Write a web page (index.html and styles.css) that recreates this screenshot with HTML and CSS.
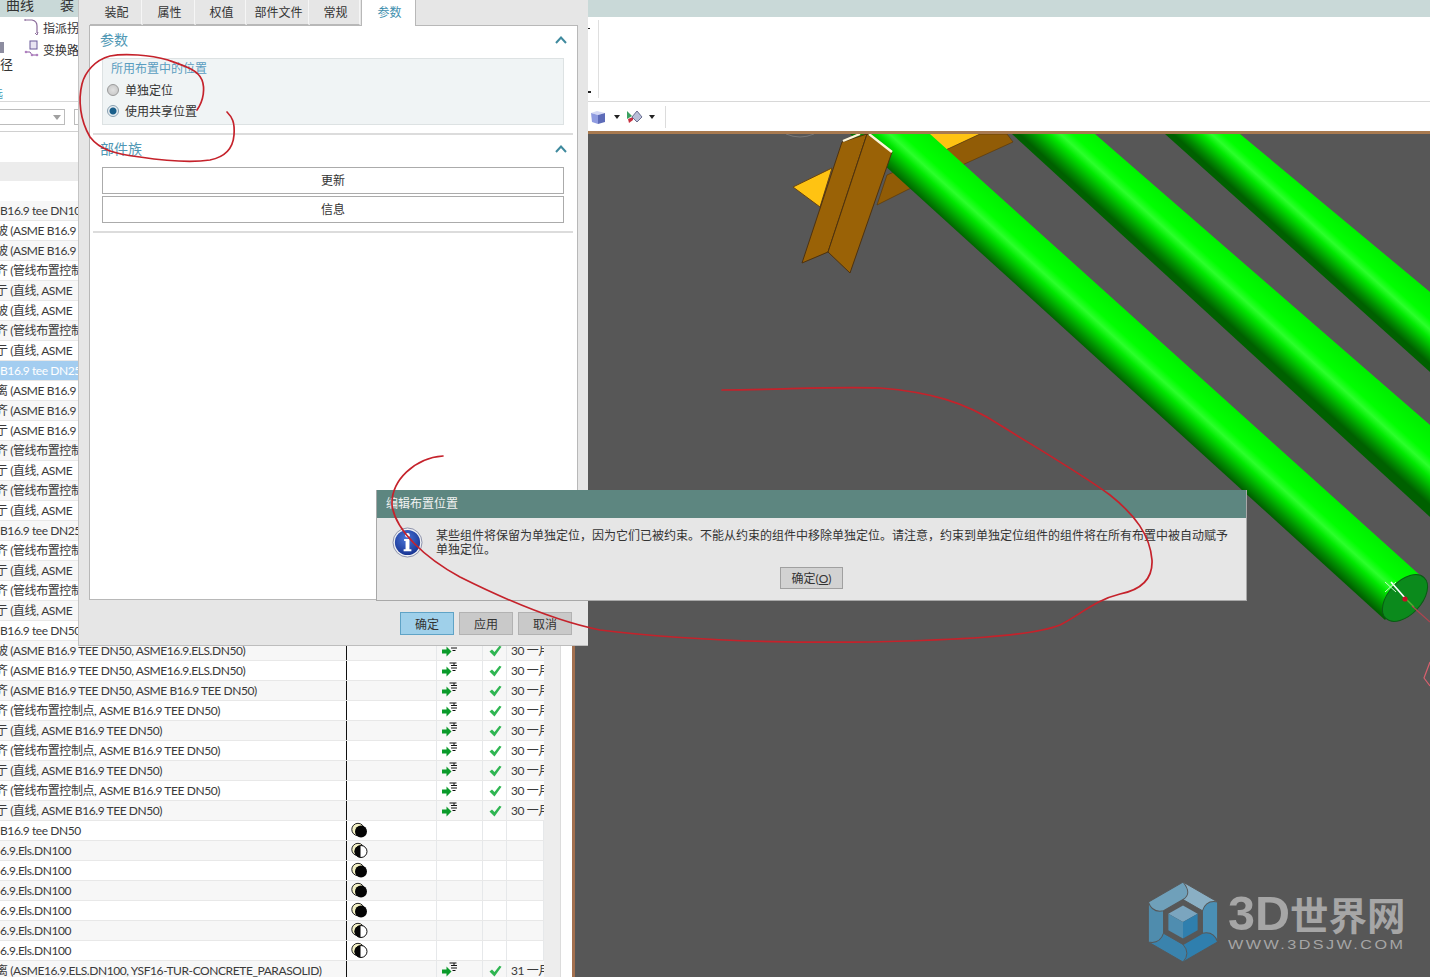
FILE: index.html
```html
<!DOCTYPE html>
<html lang="zh-CN">
<head>
<meta charset="utf-8">
<title>编辑布置位置</title>
<link rel="stylesheet" href="styles.css">
</head>
<body>
<svg class="defs" width="0" height="0" aria-hidden="true">
  <symbol id="go" viewBox="0 0 16 16">
    <path d="M0 7.5h4.5V4.500L9.500 9.500l-5 5v-3H0z" fill="#0a9a2a"/>
    <path d="M7.500 1h7M9 3.500h6M9 6h6M10.500 8.500h3" stroke="#111" stroke-width="1" fill="none"/>
    <path d="M12 1v2" stroke="#111" stroke-width="1"/>
  </symbol>
  <symbol id="ok" viewBox="0 0 13 12">
    <path d="M0.500 6.500 3 4.500l2.500 2.500L10.500 0.800l2 1L5.500 11.500z" fill="#2fb552"/>
  </symbol>
  <symbol id="moon" viewBox="0 0 17 17">
    <circle cx="7" cy="7.500" r="6.200" fill="#f4f1c4" stroke="#222" stroke-width="1"/>
    <circle cx="10" cy="9.500" r="6" fill="#050505"/>
  </symbol>
  <symbol id="half" viewBox="0 0 17 17">
    <circle cx="7" cy="7.500" r="6.200" fill="#f4f1c4" stroke="#222" stroke-width="1"/>
    <circle cx="10" cy="9.500" r="6" fill="#fff" stroke="#111" stroke-width="1"/>
    <path d="M9.500 3.500a6 6 0 0 0 0 12z" fill="#050505"/>
  </symbol>
</svg>

<div class="screen">
  <div class="band"><span class="band-a">曲线</span><span class="band-b">装</span></div>

  <div class="ribbon">
    <div class="ribbon-left">
      <span class="stub-icon"></span>
      <span class="path-label">径</span>
      <span class="cut-link">选</span>
    </div>
    <div class="ribbon-tools">
      <div class="tool">
        <svg width="16" height="18" viewBox="0 0 16 18"><path d="M1 2h7q5 1 5 6v7" fill="none" stroke="#8a6a9a" stroke-width="1.200"/><path d="M1 1v2M11 15l2 2 1-3" fill="none" stroke="#8a6a9a"/></svg>
        <span>指派拐</span>
      </div>
      <div class="tool">
        <svg width="16" height="18" viewBox="0 0 16 18"><rect x="6" y="1" width="7" height="8" fill="#e8e4f2" stroke="#6a5a9a"/><path d="M1 12h5l2 3h5" fill="none" stroke="#8a5aa0"/><circle cx="2" cy="12" r="1.300" fill="#b080c0"/><circle cx="8" cy="15" r="1.300" fill="#b080c0"/><circle cx="13" cy="15" r="1.300" fill="#b080c0"/></svg>
        <span>变换路</span>
      </div>
    </div>
    <div class="ribbon-right"><span class="ribbon-rule"></span></div>
  </div>

  <div class="toolbar">
    <div class="combo"><span class="combo-arrow"></span></div>
    <div class="combo combo-b"></div>
    <div class="tool-icons">
      <svg class="cube" width="16" height="15" viewBox="0 0 16 15"><path d="M1 3l6-2 8 2-1 0-6 2z" fill="#d4d8f4"/><path d="M1 3l7 2v9l-6-2z" fill="#8f9be0"/><path d="M8 5l7-2v9l-7 2z" fill="#5d6bb8"/></svg>
      <span class="drop"></span>
      <svg class="rule-icon" width="17" height="14" viewBox="0 0 17 14"><path d="M1 1l5 5-5 3z" fill="#3aa060"/><path d="M2 9l5-2v3l-4 3z" fill="#c83040"/><path d="M6 7l5-6 5 6-5 5z" fill="#b9bfd8" stroke="#6a6f90"/></svg>
      <span class="drop"></span>
      <span class="tool-rule"></span>
    </div>
  </div>

  <div class="work">
    <section class="list">
      <div class="list-head"></div>
      <div class="list-gap"></div>
      <div class="list-body">
        <div class="rows">
          <div class="row"><span class="name">B16.9 tee DN100</span><i></i><i></i><i></i><i></i></div>
          <div class="row"><span class="name cut">坡 (ASME B16.9</span><i></i><i></i><i></i><i></i></div>
          <div class="row"><span class="name cut">坡 (ASME B16.9</span><i></i><i></i><i></i><i></i></div>
          <div class="row"><span class="name cut">齐 (管线布置控制</span><i></i><i></i><i></i><i></i></div>
          <div class="row"><span class="name cut">亍 (直线, ASME</span><i></i><i></i><i></i><i></i></div>
          <div class="row"><span class="name cut">坡 (直线, ASME</span><i></i><i></i><i></i><i></i></div>
          <div class="row"><span class="name cut">齐 (管线布置控制</span><i></i><i></i><i></i><i></i></div>
          <div class="row"><span class="name cut">亍 (直线, ASME</span><i></i><i></i><i></i><i></i></div>
          <div class="row selected"><span class="name">B16.9 tee DN25</span><i></i><i></i><i></i><i></i></div>
          <div class="row"><span class="name cut">离 (ASME B16.9</span><i></i><i></i><i></i><i></i></div>
          <div class="row"><span class="name cut">齐 (ASME B16.9</span><i></i><i></i><i></i><i></i></div>
          <div class="row"><span class="name cut">亍 (ASME B16.9</span><i></i><i></i><i></i><i></i></div>
          <div class="row"><span class="name cut">齐 (管线布置控制</span><i></i><i></i><i></i><i></i></div>
          <div class="row"><span class="name cut">亍 (直线, ASME</span><i></i><i></i><i></i><i></i></div>
          <div class="row"><span class="name cut">齐 (管线布置控制</span><i></i><i></i><i></i><i></i></div>
          <div class="row"><span class="name cut">亍 (直线, ASME</span><i></i><i></i><i></i><i></i></div>
          <div class="row"><span class="name">B16.9 tee DN25</span><i></i><i></i><i></i><i></i></div>
          <div class="row"><span class="name cut">齐 (管线布置控制</span><i></i><i></i><i></i><i></i></div>
          <div class="row"><span class="name cut">亍 (直线, ASME</span><i></i><i></i><i></i><i></i></div>
          <div class="row"><span class="name cut">齐 (管线布置控制</span><i></i><i></i><i></i><i></i></div>
          <div class="row"><span class="name cut">亍 (直线, ASME</span><i></i><i></i><i></i><i></i></div>
          <div class="row"><span class="name">B16.9 tee DN50</span><i></i><i></i><i></i><i></i></div>
          <div class="row"><span class="name cut">坡 (ASME B16.9 TEE DN50, ASME16.9.ELS.DN50)</span><i></i><i><svg class="go"><use href="#go"/></svg></i><i><svg class="ok"><use href="#ok"/></svg></i><i class="date">30 一月</i></div>
          <div class="row"><span class="name cut">齐 (ASME B16.9 TEE DN50, ASME16.9.ELS.DN50)</span><i></i><i><svg class="go"><use href="#go"/></svg></i><i><svg class="ok"><use href="#ok"/></svg></i><i class="date">30 一月</i></div>
          <div class="row"><span class="name cut">齐 (ASME B16.9 TEE DN50, ASME B16.9 TEE DN50)</span><i></i><i><svg class="go"><use href="#go"/></svg></i><i><svg class="ok"><use href="#ok"/></svg></i><i class="date">30 一月</i></div>
          <div class="row"><span class="name cut">齐 (管线布置控制点, ASME B16.9 TEE DN50)</span><i></i><i><svg class="go"><use href="#go"/></svg></i><i><svg class="ok"><use href="#ok"/></svg></i><i class="date">30 一月</i></div>
          <div class="row"><span class="name cut">亍 (直线, ASME B16.9 TEE DN50)</span><i></i><i><svg class="go"><use href="#go"/></svg></i><i><svg class="ok"><use href="#ok"/></svg></i><i class="date">30 一月</i></div>
          <div class="row"><span class="name cut">齐 (管线布置控制点, ASME B16.9 TEE DN50)</span><i></i><i><svg class="go"><use href="#go"/></svg></i><i><svg class="ok"><use href="#ok"/></svg></i><i class="date">30 一月</i></div>
          <div class="row"><span class="name cut">亍 (直线, ASME B16.9 TEE DN50)</span><i></i><i><svg class="go"><use href="#go"/></svg></i><i><svg class="ok"><use href="#ok"/></svg></i><i class="date">30 一月</i></div>
          <div class="row"><span class="name cut">齐 (管线布置控制点, ASME B16.9 TEE DN50)</span><i></i><i><svg class="go"><use href="#go"/></svg></i><i><svg class="ok"><use href="#ok"/></svg></i><i class="date">30 一月</i></div>
          <div class="row"><span class="name cut">亍 (直线, ASME B16.9 TEE DN50)</span><i></i><i><svg class="go"><use href="#go"/></svg></i><i><svg class="ok"><use href="#ok"/></svg></i><i class="date">30 一月</i></div>
          <div class="row"><span class="name">B16.9 tee DN50</span><i><svg class="state"><use href="#moon"/></svg></i><i></i><i></i><i></i></div>
          <div class="row"><span class="name">6.9.Els.DN100</span><i><svg class="state"><use href="#half"/></svg></i><i></i><i></i><i></i></div>
          <div class="row"><span class="name">6.9.Els.DN100</span><i><svg class="state"><use href="#moon"/></svg></i><i></i><i></i><i></i></div>
          <div class="row"><span class="name">6.9.Els.DN100</span><i><svg class="state"><use href="#moon"/></svg></i><i></i><i></i><i></i></div>
          <div class="row"><span class="name">6.9.Els.DN100</span><i><svg class="state"><use href="#moon"/></svg></i><i></i><i></i><i></i></div>
          <div class="row"><span class="name">6.9.Els.DN100</span><i><svg class="state"><use href="#half"/></svg></i><i></i><i></i><i></i></div>
          <div class="row"><span class="name">6.9.Els.DN100</span><i><svg class="state"><use href="#half"/></svg></i><i></i><i></i><i></i></div>
          <div class="row"><span class="name cut">离 (ASME16.9.ELS.DN100, YSF16-TUR-CONCRETE_PARASOLID)</span><i></i><i><svg class="go"><use href="#go"/></svg></i><i><svg class="ok"><use href="#ok"/></svg></i><i class="date">31 一月</i></div>
        </div>
        <div class="track"></div>
      </div>
    </section>

    <section class="viewport">
      <svg class="scene" viewBox="575 134 855 843" preserveAspectRatio="none">
        <defs>
          <linearGradient id="p1" gradientUnits="userSpaceOnUse" x1="1180" y1="359" x2="1143" y2="400">
            <stop offset="0" stop-color="#00f000"/><stop offset=".35" stop-color="#00ff00"/><stop offset=".5" stop-color="#2cff2c"/><stop offset=".63" stop-color="#00e800"/><stop offset=".86" stop-color="#009000"/><stop offset="1" stop-color="#006000"/>
          </linearGradient>
          <linearGradient id="p2" gradientUnits="userSpaceOnUse" x1="1250" y1="268" x2="1213" y2="309">
            <stop offset="0" stop-color="#00f000"/><stop offset=".35" stop-color="#00ff00"/><stop offset=".5" stop-color="#2cff2c"/><stop offset=".63" stop-color="#00e800"/><stop offset=".86" stop-color="#009000"/><stop offset="1" stop-color="#006000"/>
          </linearGradient>
          <linearGradient id="p3" gradientUnits="userSpaceOnUse" x1="1330" y1="206" x2="1296" y2="244">
            <stop offset="0" stop-color="#00f000"/><stop offset=".35" stop-color="#00ff00"/><stop offset=".5" stop-color="#2cff2c"/><stop offset=".63" stop-color="#00e800"/><stop offset=".86" stop-color="#009000"/><stop offset="1" stop-color="#006000"/>
          </linearGradient>
        </defs>
        <path d="M786 134q14 6 28 0" fill="none" stroke="#777" stroke-width="1"/>
        <polygon points="1165,134 1240,134 1430,292 1430,372" fill="url(#p3)"/>
        <polygon points="1012,134 1095,134 1430,425 1430,517" fill="url(#p2)"/>
        <polygon points="793,187 832,168 820,207" fill="#ffc312" stroke="#6a4410"/>
        <polygon points="930,134 980,134 950,148 920,160" fill="#ffc312"/>
        <polygon points="980,134 1007,134 1013,142 907,190 877,205 887,175 950,148" fill="#915c06" stroke="#5a3a0a" stroke-width=".7"/>
        <polygon points="850,134 930,134 1422,577 1385,620" fill="url(#p1)"/>
        <polygon points="813,235 808,247 802,263 828,252" fill="#7c5008"/>
        <polygon points="842,142 867,134 828,252 802,263" fill="#9a6206" stroke="#4d3210" stroke-width="1"/>
        <polygon points="867,134 892,152 850,273 828,252" fill="#9a6206" stroke="#4d3210" stroke-width="1"/>
        <path d="M843 141l17-7M869 134l23 18" stroke="#fff6d8" stroke-width="2.400" fill="none"/>
        <ellipse cx="1405" cy="598" rx="28" ry="16.500" transform="rotate(-47 1405 598)" fill="#0b8a1c" stroke="#0a5a14"/>
        <path d="M1391 582l14 16" stroke="#fff" stroke-width="1.600"/>
        <path d="M1405 598l9 9" stroke="#56b030" stroke-width="1.400"/>
        <path d="M1412 606l18 16" stroke="#b04550" stroke-width="1.200"/>
        <path d="M1385 582l11 10M1396 582l-11 10" stroke="#c8f8c8" stroke-width="1"/>
        <circle cx="1405" cy="599" r="2.600" fill="#c80f25"/>
        <path d="M1430 662l-6 16 6 8" fill="none" stroke="#d8606e" stroke-width="1.200"/>
      </svg>
      <div class="logo">
        <svg width="80" height="82" viewBox="-41 -42 82 84">
          <g stroke="#575757" stroke-width="1">
            <path d="M0-41 35.500-20.500Q30-6 20-11.500L0-23Q-8-32 0-41Z" fill="#8aafc4"/>
            <path d="M0-41 35.500-20.500Q30-6 20-11.500L0-23Q-8-32 0-41Z" fill="#4a8fb5" transform="rotate(60)"/>
            <path d="M0-41 35.500-20.500Q30-6 20-11.500L0-23Q-8-32 0-41Z" fill="#2f7fae" transform="rotate(120)"/>
            <path d="M0-41 35.500-20.500Q30-6 20-11.500L0-23Q-8-32 0-41Z" fill="#3a83ad" transform="rotate(180)"/>
            <path d="M0-41 35.500-20.500Q30-6 20-11.500L0-23Q-8-32 0-41Z" fill="#4f8cad" transform="rotate(240)"/>
            <path d="M0-41 35.500-20.500Q30-6 20-11.500L0-23Q-8-32 0-41Z" fill="#6fa0ba" transform="rotate(300)"/>
          </g>
          <path d="M0-17 15-8.500 0 0-15-8.500Z" fill="#7ba5bf"/>
          <path d="M-15-8.500 0 0V17L-15 8.500Z" fill="#4f8db0"/>
          <path d="M15-8.500 0 0V17L15 8.500Z" fill="#2f7fae"/>
        </svg>
        <div class="logo-text">
          <div class="logo-name"><span class="logo-3d">3D</span>世界网</div>
          <div class="logo-url">WWW.3DSJW.COM</div>
        </div>
      </div>
    </section>
  </div>

  <div class="props">
    <nav class="tabs">
      <span class="tab t52">装配</span><span class="tab t52">属性</span><span class="tab t51">权值</span><span class="tab t62">部件文件</span><span class="tab t50">常规</span><span class="tab active">参数</span>
    </nav>
    <div class="panel">
      <div class="sec-head"><span>参数</span><svg class="chev" width="12" height="8" viewBox="0 0 12 8"><path d="M1 7l5-5.500L11 7" fill="none" stroke="#3f8a9e" stroke-width="2"/></svg></div>
      <div class="group">
        <div class="group-label">所用布置中的位置</div>
        <label class="radio"><span class="dot"></span>单独定位</label>
        <label class="radio"><span class="dot on"></span>使用共享位置</label>
      </div>
      <hr class="sep first">
      <div class="sec-head second"><span>部件族</span><svg class="chev" width="12" height="8" viewBox="0 0 12 8"><path d="M1 7l5-5.500L11 7" fill="none" stroke="#3f8a9e" stroke-width="2"/></svg></div>
      <div class="actions">
        <button class="wide">更新</button>
        <button class="wide">信息</button>
      </div>
      <hr class="sep last">
    </div>
    <div class="props-foot">
      <button class="foot-btn primary">确定</button>
      <button class="foot-btn">应用</button>
      <button class="foot-btn">取消</button>
    </div>
  </div>

  <div class="message">
    <div class="message-title">编辑布置位置</div>
    <div class="message-body">
      <svg class="info" width="31" height="31" viewBox="0 0 32 32">
        <defs><radialGradient id="ib" cx=".45" cy=".35" r=".7"><stop offset="0" stop-color="#4a75d8"/><stop offset="1" stop-color="#14308e"/></radialGradient></defs>
        <circle cx="16" cy="16" r="15" fill="#eef0f4" stroke="#8a8fa8"/>
        <circle cx="16" cy="16" r="13" fill="url(#ib)"/>
        <circle cx="16" cy="8.500" r="2.400" fill="#fff"/>
        <path d="M12.500 12.500h5.500v10.500h2v2h-8v-2h2v-8.500h-1.500z" fill="#fff"/>
      </svg>
      <p class="message-text">某些组件将保留为单独定位，因为它们已被约束。不能从约束的组件中移除单独定位。请注意，约束到单独定位组件的组件将在所有布置中被自动赋予单独定位。</p>
    </div>
    <div class="message-foot"><button class="msg-btn">确定(<u>O</u>)</button></div>
  </div>

  <svg class="ink" viewBox="0 0 1430 977" aria-hidden="true">
    <path d="M197 110C204 100 205 88 202 80 198 70 185 66 168 60 150 55 125 53 110 56 95 60 85 72 82 84 78 100 80 120 90 137 100 150 115 154 140 157 160 160 190 163 210 160 225 157 233 148 234 135 235 122 232 117 227 112"/>
    <path d="M722 390C780 390 830 386 880 388 930 392 965 402 1000 425 1040 450 1080 473 1110 495 1135 515 1150 535 1152 560 1153 580 1140 590 1120 594 1095 600 1080 615 1060 625 1030 637 950 640 870 642 780 643 680 640 600 630 550 620 500 597 460 577 425 558 395 530 392 505 391 480 415 458 443 456"/>
  </svg>
</div>
</body>
</html>
```
FILE: styles.css
```css
* { box-sizing: border-box; }
html, body { margin: 0; padding: 0; }
body {
  width: 1430px;
  height: 977px;
  overflow: hidden;
  background: #fff;
  font-family: Lato, "Noto Sans CJK SC", sans-serif;
  font-size: 12px;
  color: #333;
}
.defs { position: absolute; }
.screen {
  position: relative;
  width: 1430px;
  height: 977px;
  overflow: hidden;
  display: flex;
  flex-direction: column;
}

/* top chrome */
.band {
  height: 17px;
  flex: none;
  background: #c9d9d8;
  font-size: 14px;
  line-height: 10px;
  overflow: hidden;
  display: flex;
  padding-left: 6px;
  gap: 26px;
  color: #333;
}
.ribbon {
  height: 85px;
  flex: none;
  display: flex;
  background: #fff;
  border-bottom: 1px solid #d8d8d8;
}
.ribbon-left {
  width: 24px;
  flex: none;
  overflow: hidden;
  display: flex;
  flex-direction: column;
  padding-top: 25px;
}
.stub-icon { width: 4px; height: 11px; background: #8d8da0; }
.path-label { font-size: 13px; line-height: 16px; margin-top: 3px; }
.cut-link { color: #3f9ab5; line-height: 14px; margin: 15px 0 0 -9px; }
.ribbon-tools {
  width: 564px;
  flex: none;
  padding-top: 1px;
  display: flex;
  flex-direction: column;
  gap: 4px;
}
.tool { display: flex; align-items: center; gap: 3px; height: 18px; white-space: nowrap; }
.ribbon-right {
  flex: 1;
  padding: 3px 0 3px 10px;
  display: flex;
  background:
    linear-gradient(#222, #222) 0 11px / 2px 1px no-repeat,
    linear-gradient(#222, #222) 0 74px / 3px 2px no-repeat;
}
.ribbon-rule { width: 1px; background: #dfdfdf; }
.toolbar {
  height: 29px;
  flex: none;
  display: flex;
  align-items: center;
  background: #fff;
  padding-top: 1px;
}
.combo {
  width: 66px;
  height: 16px;
  margin-left: -1px;
  border: 1px solid #bcbcbc;
  position: relative;
}
.combo-arrow {
  position: absolute;
  right: 3px;
  top: 5px;
  border: 4px solid transparent;
  border-top: 5px solid #a0a0a0;
  border-bottom: 0;
}
.combo-b { width: 10px; margin-left: 9px; }
.tool-icons {
  margin-left: 506px;
  display: flex;
  align-items: center;
  height: 100%;
}
.cube { margin-right: 8px; }
.drop { width: 0; height: 0; border: 3px solid transparent; border-top: 4px solid #222; border-bottom: 0; margin-right: 6px; }
.rule-icon + .drop { margin-left: 6px; }
.tool-rule { width: 1px; height: 22px; background: #dcdcdc; margin-left: 4px; }

/* work area */
.work {
  flex: 1;
  min-height: 0;
  display: grid;
  grid-template-columns: 572px 1fr;
}
.list {
  border-top: 1px solid #d0d0d0;
  background: #fff;
  overflow: hidden;
  display: flex;
  flex-direction: column;
}
.list-head { height: 49px; flex: none; background: linear-gradient(#fff 0 30px, #ececec 30px); }
.list-gap { height: 20px; flex: none; }
.list-body { display: flex; flex: 1; min-height: 0; }
.rows { width: 544px; flex: none; }
.track { width: 17px; flex: none; background: #ededed; border-right: 1px solid #dcdcdc; }
.row {
  height: 20px;
  display: grid;
  grid-template-columns: 347px 90px 46px 24px 37px;
  border-bottom: 1px solid #e8e8e8;
  line-height: 19px;
  background: #fff;
  color: #3a3a3a;
  letter-spacing: -0.42px;
}
.row:nth-child(odd) { background: #f7f7f7; }
.row.selected { background: #a3cdf0; color: #fff; }
.name {
  white-space: nowrap;
  overflow: hidden;
  border-right: 1px solid #111;
}
.cut { text-indent: -4px; }
.row i {
  font-style: normal;
  border-right: 1px solid #e6e8ea;
  display: flex;
  align-items: center;
  overflow: hidden;
  white-space: nowrap;
}
.row i.date { border-right: 0; padding-left: 4px; }
.go { width: 16px; height: 16px; margin: -2px 0 0 5px; }
.ok { width: 13px; height: 12px; margin: 1px 0 0 6px; }
.state { width: 17px; height: 17px; margin: -1px 0 0 4px; }

.viewport {
  position: relative;
  background: #575757;
  border-top: 3px solid #a87a50;
  border-left: 3px solid #a3704f;
  overflow: hidden;
}
.scene { display: block; width: 100%; height: 100%; }
.logo {
  position: absolute;
  right: 24px;
  bottom: 14px;
  display: flex;
  align-items: center;
  gap: 5px;
}
.logo-text { color: #a6a6a6; width: 178px; padding: 4px 0; }
.logo-name {
  font-family: "Noto Sans CJK SC", sans-serif;
  font-weight: 700;
  font-size: 38.500px;
  line-height: 42px;
  margin-bottom: 4px;
  white-space: nowrap;
}
.logo-3d { font-family: "Liberation Sans", sans-serif; font-size: 48.500px; }
.logo-url {
  font-family: "Liberation Sans", sans-serif;
  font-size: 12px;
  line-height: 14px;
  letter-spacing: 1.800px;
  transform: scaleX(1.35);
  transform-origin: left center;
  white-space: nowrap;
}

/* properties window */
.props {
  position: absolute;
  left: 78px;
  top: 0;
  width: 510px;
  height: 646px;
  background: #e6e6e6;
  border-left: 1px solid #c4c4c4;
  border-bottom: 1px solid #bdbdbd;
  display: flex;
  flex-direction: column;
  padding: 0 10px;
}
.tabs { display: flex; height: 26px; flex: none; gap: 1px; padding-left: 1px; position: relative; z-index: 1; margin-bottom: -1px; }
.tab {
  display: flex;
  align-items: center;
  justify-content: center;
  height: 25px;
  padding: 0 0 2px 2px;
  border-right: 1px solid #f6f6f6;
  border-bottom: 1px solid #b8b8b8;
}
.t52 { width: 52px; }
.t51 { width: 50px; }
.t62 { width: 62px; }
.t50 { width: 50px; }
.tab.active {
  width: 55px;
  height: 26px;
  padding-bottom: 4px;
  background: #fff;
  color: #3f8fae;
  border: 1px solid #b8b8b8;
  border-top: 0;
  border-bottom: 0;
}
.panel {
  height: 575px;
  flex: none;
  background: #fff;
  border: 1px solid #b8b8b8;
  padding: 0 4px 0 3px;
}
.sec-head {
  display: flex;
  align-items: center;
  justify-content: space-between;
  height: 26px;
  padding: 0 6px 0 7px;
  color: #4f97b4;
  font-size: 14px;
}
.chev { margin-top: 1px; }
.group {
  margin: 6px 9px 0;
  height: 67px;
  background: #f0f4f5;
  border: 1px solid #dde2e3;
  padding: 2px 8px;
}
.group-label { color: #5a9dc0; line-height: 16px; }
.radio { display: flex; align-items: center; gap: 6px; height: 21px; margin-left: -4px; }
.radio:first-of-type { margin-top: 2px; }
.dot {
  width: 12px;
  height: 12px;
  border-radius: 50%;
  border: 1px solid #9a9a9a;
  background: radial-gradient(circle, #e0e0e0, #c4c4c4);
}
.dot.on { background: radial-gradient(circle, #1a5f8a 0 3px, #e8eef2 4px); border-color: #88a0b0; }
.sep { border: 0; border-top: 2px solid #dcdcdc; margin: 0; }
.sep.first { margin-top: 8px; }
.sec-head.second { height: 26px; }
.actions { margin: 6px 9px 0; display: flex; flex-direction: column; gap: 2px; }
.wide {
  height: 27px;
  background: #fff;
  border: 1px solid #ababab;
  font: inherit;
  color: #333;
  padding: 0 0 2px;
}
.sep.last { margin-top: 8px; }
.props-foot {
  display: flex;
  justify-content: flex-end;
  gap: 5px;
  padding: 12px 6px 0 0;
}
.foot-btn {
  width: 54px;
  height: 23px;
  background: #c9c9c9;
  border: 1px solid #b2b2b2;
  font: inherit;
  color: #333;
  padding: 0;
}
.foot-btn.primary { background: #9fd0ea; border-color: #5fa3c6; }

/* message box */
.message {
  position: absolute;
  left: 376px;
  top: 490px;
  width: 871px;
  height: 111px;
  background: #e6e6e6;
  border: 1px solid #a8a8a8;
  border-top: 0;
}
.message-title {
  height: 28px;
  background: #5d8680;
  color: #f2f2f2;
  line-height: 28px;
  padding-left: 9px;
}
.message-body { display: flex; padding: 9px 0 0 15px; height: 49px; }
.info { flex: none; }
.message-text { margin: 2px 0 0 13px; width: 796px; line-height: 14px; color: #333; }
.message-foot { display: flex; justify-content: center; }
.msg-btn {
  width: 63px;
  height: 22px;
  background: #d2d2d2;
  border: 1px solid #a0a0a0;
  font: inherit;
  color: #333;
  padding: 0 0 2px;
}

/* hand-drawn annotation */
.ink {
  position: absolute;
  inset: 0;
  width: 1430px;
  height: 977px;
  pointer-events: none;
}
.ink path { fill: none; stroke: #c5222b; stroke-width: 1.700; stroke-linecap: round; }
```
